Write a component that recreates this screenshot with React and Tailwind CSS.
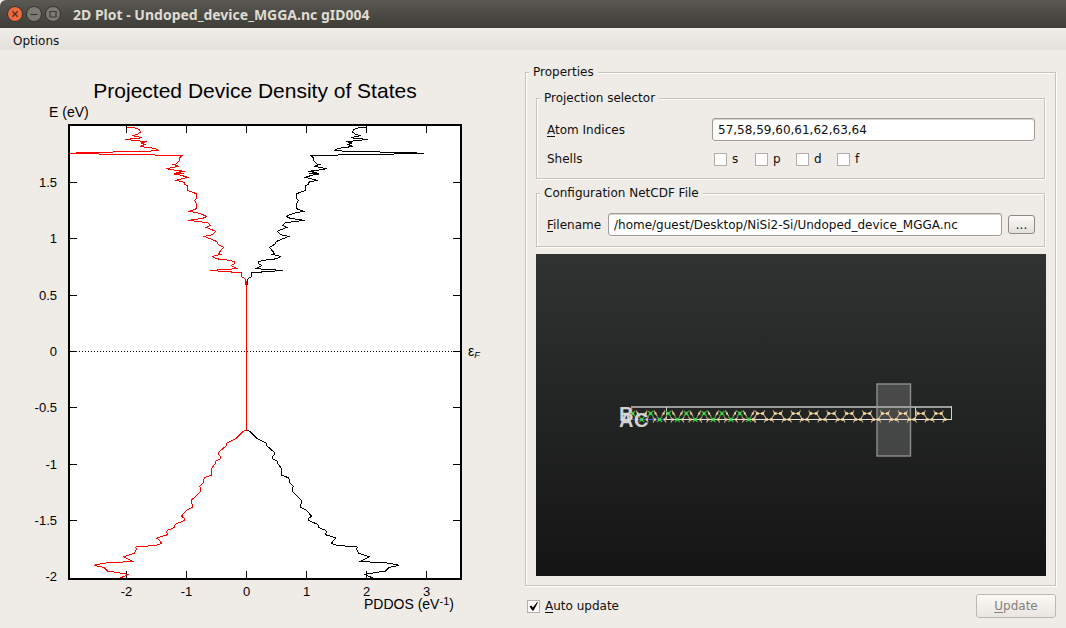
import React from "react";

// Density trace for the positive spin, in thirds of a plot unit
const UPPER_BAND =
  "379,52 360,52 342,58 337,66 345,72 360,77 334,83 350,86 385,88 358,91 319,95 335,99 324,103 340,110 312,112 290,117 283,122 330,124 417,126 507,128 552,130 465,132 297,135 214,137 219,142 221,152 230,162 238,164 223,169 240,172 260,176 237,180 205,184 232,187 207,190 237,192 215,196 196,202 216,207 233,211 204,217 206,222 196,228 196,242 184,246 170,251 170,265 175,271 170,280 170,296 180,300 191,304 160,310 139,319 150,325 194,331 137,338 128,346 140,352 112,364 122,374 146,379 108,395 106,402 89,412 103,430 98,433 122,439 112,446 70,451 55,455 56,461 65,467 50,475 70,478 128,481 80,485 35,488 34,500 24,506 22,524";

const LOWER_BAND =
  "20,91 30,94 50,115 75,127 80,130 79,136 103,157 103,165 98,168 97,176 112,184 114,192 124,205 124,225 145,233 149,240 149,247 160,260 157,262 157,275 183,299 185,302 181,322 200,331 215,349 205,355 205,361 233,373 237,383 257,391 259,396 256,404 289,414 277,424 275,431 290,436 352,441 350,448 355,459 370,464 388,470 358,485 420,487 450,490 478,496 448,502 437,513 405,518 375,523 385,528 400,535";

const X_TICKS = [
  { label: "-2", x: 126.5 },
  { label: "-1", x: 186.5 },
  { label: "0", x: 246.5 },
  { label: "1", x: 306.5 },
  { label: "2", x: 366.5 },
  { label: "3", x: 426.5 },
];

const Y_TICKS = [
  { label: "1.5", y: 182.5 },
  { label: "1", y: 238.5 },
  { label: "0.5", y: 295.5 },
  { label: "0", y: 351.5 },
  { label: "-0.5", y: 407.5 },
  { label: "-1", y: 464.5 },
  { label: "-1.5", y: 520.5 },
  { label: "-2", y: 576.5 },
];

const Band = ({ points, transform, color }) => (
  <polyline
    points={points}
    transform={transform}
    fill="none"
    stroke={color}
    strokeWidth="1"
    vectorEffect="non-scaling-stroke"
  />
);

const DensityPlot = () => {
  return (
    <svg
      viewBox="0 50 515 578"
      className="block w-full font-['Liberation_Sans',sans-serif]"
      role="img"
      aria-label="Projected Device Density of States"
    >
      <rect x="69" y="125" width="392" height="454" fill="#fff" />
      <text x="255" y="98" fontSize="21" textAnchor="middle">
        Projected Device Density of States
      </text>
      <text x="49" y="117" fontSize="14">
        E (eV)
      </text>
      <clipPath id="plot-area">
        <rect x="70" y="126" width="390" height="452" />
      </clipPath>
      <g shapeRendering="crispEdges" stroke="#000">
        <line x1="70" y1="351.5" x2="460" y2="351.5" strokeDasharray="1 2" />
        {X_TICKS.map(({ label, x }) => (
          <path key={label} d={`M${x} 125v8M${x} 579v-8`} />
        ))}
        {Y_TICKS.slice(0, 7).map(({ label, y }) => (
          <path key={label} d={`M69 ${y}h8M461 ${y}h-8`} />
        ))}
        <g clipPath="url(#plot-area)">
          <Band points={UPPER_BAND} transform="translate(240 110) scale(.33333)" color="#000" />
          <Band points={LOWER_BAND} transform="translate(240 400) scale(.33333)" color="#000" />
          <Band points={UPPER_BAND} transform="translate(253 110) scale(-.33333 .33333)" color="#f00" />
          <Band points={LOWER_BAND} transform="translate(253 400) scale(-.33333 .33333)" color="#f00" />
          <line x1="246.5" y1="281" x2="246.5" y2="431" stroke="#f00" />
        </g>
        <rect x="69" y="125" width="392" height="454" fill="none" strokeWidth="2" />
      </g>
      <g fontSize="13">
        {X_TICKS.map(({ label, x }) => (
          <text key={label} x={x} y="596" textAnchor="middle">
            {label}
          </text>
        ))}
        {Y_TICKS.map(({ label, y }) => (
          <text key={label} x="57" y={y + 4} textAnchor="end">
            {label}
          </text>
        ))}
      </g>
      <text x="364" y="609" fontSize="14">
        PDDOS (eV
        <tspan fontSize="11" dy="-4">
          -1
        </tspan>
        <tspan dy="4">)</tspan>
      </text>
      <text x="468" y="356" fontSize="14">
        ε
        <tspan fontSize="9" fontStyle="italic" dy="2">
          F
        </tspan>
      </text>
    </svg>
  );
};

const PERIOD = 17.85;
const SILICON = Array.from({ length: 11 }, (_, i) => 224 + i * PERIOD);
const NICKEL = Array.from({ length: 7 }, (_, i) => 96.7 + i * PERIOD);

const DeviceView = () => {
  return (
    <svg viewBox="0 0 510 322" className="block w-full" role="img" aria-label="Device configuration">
      <defs>
        <linearGradient id="backdrop" x1="0" y1="0" x2="0" y2="1">
          <stop offset="0" stopColor="#303332" />
          <stop offset="0.5" stopColor="#222423" />
          <stop offset="1" stopColor="#141414" />
        </linearGradient>
      </defs>
      <rect width="510" height="322" fill="url(#backdrop)" />
      <rect x="341" y="130" width="33.5" height="72" fill="#fff" fillOpacity="0.17" stroke="#8d8f8e" strokeWidth="1.4" />
      {/* unit cell */}
      <path d="M95 153H415.5" stroke="#9a9c9b" strokeWidth="2" />
      <path d="M130 165.5H415.5" stroke="#e6e6e6" />
      <path d="M130.5 153v13M379.5 153v13M415.5 152v14" stroke="#d0d0d0" />
      <path d="M95 165.5H130" stroke="#3a62e8" />
      <path d="M95.5 153v13" stroke="#f08030" strokeWidth="1.5" />
      {/* silicon */}
      {SILICON.map((x) => (
        <g key={x} transform={`translate(${x} 0)`}>
          <path
            d="M-3 159.5h6M3 159.5l3.5 5.5M-3 159.5l-3.5 5.5M3 159.5l1.8-3M-3 159.5l-1.8-3M6.5 165.5h-.8l-1.5 3M-6.5 165.5h.8l1.5 3"
            fill="none"
            stroke="#c4a981"
            strokeWidth="1.2"
          />
          <path d="M-4 158.3h2.8v2.4h-2.8zM1.2 158.3h2.8v2.4h-2.8zM-8 164.3h2.8v2.4h-2.8zM5.2 164.3h2.8v2.4h-2.8z" fill="#f8dba6" />
        </g>
      ))}
      {/* nickel silicide */}
      {NICKEL.map((x) => (
        <g key={x} transform={`translate(${x} 0)`}>
          <path
            d="M5 159.5l-1.5-3M5 159.5l2 3M13 159.5l1.5-3M13 159.5l-2 3M4 165.5l-2-3M4 165.5l-1.5 3M14 165.5l2-3M14 165.5l1.5 3"
            stroke="#c4a981"
            strokeWidth="1.2"
          />
          <path d="M4 158.5h2v2h-2zM12 158.5h2v2h-2zM3.5 164.5h2v2h-2zM13 164.5h2v2h-2z" fill="#f3d7a4" />
          <path d="M-2.5 157l5 5M-2.5 162l5-5M6.5 163l5 5M6.5 168l5-5" stroke="#2fae38" strokeWidth="1.4" />
          <path d="M-1.2 158.3h2.4v2.4h-2.4zM7.8 164.3h2.4v2.4h-2.4z" fill="#4be052" />
        </g>
      ))}
      <g
        className="font-['Liberation_Sans',sans-serif] font-bold"
        fontSize="20"
        fill="#dcdcdc"
        fillOpacity="0.95"
      >
        <text x="83" y="167">B</text>
        <text x="83" y="173">A</text>
        <text x="98" y="173">C</text>
      </g>
    </svg>
  );
};

const Group = ({ title, className = "", children }) => (
  <fieldset
    className={`min-w-0 border border-[#c6c3bf] px-[3px] shadow-[1px_1px_0_#fff,inset_1px_1px_0_#fff] ${className}`}
  >
    <legend className="bg-[#efebe7] px-1">{title}</legend>
    {children}
  </fieldset>
);

const Checkbox = ({ children, defaultChecked, className = "" }) => (
  <label className={`flex items-center gap-[5px] ${className}`}>
    <span className="grid size-[13px]">
      <input
        type="checkbox"
        defaultChecked={defaultChecked}
        className="peer col-start-1 row-start-1 size-[13px] appearance-none border border-[#b4afaa] bg-white"
      />
      <svg
        viewBox="0 0 13 13"
        className="pointer-events-none invisible col-start-1 row-start-1 size-[13px] peer-checked:visible"
      >
        <path d="M2.5 6.2l2-.6 1.3 1.9L10.3 2l.6.5L6.6 10.6H5.2z" />
      </svg>
    </span>
    <span>{children}</span>
  </label>
);

const inputClass =
  "h-[23px] min-w-0 flex-1 rounded-[3px] border border-[#a09a94] bg-white px-[5px] shadow-[inset_0_1px_0_#d5d2ce,0_1px_0_#f6f4f2] outline-none";

const TitleBar = () => (
  <header className="flex h-7 items-center rounded-tl-md bg-linear-to-b from-[#5a5852] to-[#3e3d38] pl-[7px]">
    <div className="flex gap-[3px]">
      <button type="button" aria-label="Close" className="size-4">
        <svg viewBox="0 0 16 16">
          <circle cx="8" cy="8" r="7.5" fill="#ee6a3e" stroke="#35342f" />
          <path d="M5.3 5.3l5.4 5.4M10.7 5.3l-5.4 5.4" stroke="#53301f" strokeWidth="1.3" />
        </svg>
      </button>
      <button type="button" aria-label="Minimize" className="size-4">
        <svg viewBox="0 0 16 16">
          <circle cx="8" cy="8" r="7.5" fill="#7c7a73" stroke="#35342f" />
          <path d="M4.5 8.5h7" stroke="#3a3935" strokeWidth="1.2" />
        </svg>
      </button>
      <button type="button" aria-label="Maximize" className="size-4">
        <svg viewBox="0 0 16 16">
          <circle cx="8" cy="8" r="7.5" fill="#7c7a73" stroke="#35342f" />
          <path d="M5 5.5h6v5.5h-6z" fill="none" stroke="#3a3935" strokeWidth="1.2" />
        </svg>
      </button>
    </div>
    <h1 className="ml-[12px] pt-px font-['Noto_Sans',sans-serif] text-[14px] font-bold text-[#dfdbd2]">
      2D Plot - Undoped_device_MGGA.nc gID004
    </h1>
  </header>
);

const PropertiesPanel = () => (
  <Group title="Properties">
    <div className="px-[7px] pt-[10px] pb-[9px]">
      <Group title="Projection selector">
        <div className="px-[6px] pt-3 pb-[11px] pl-[7px]">
          <div className="flex items-center">
            <label htmlFor="atoms" className="w-[165px]">
              <u className="underline-offset-2">A</u>tom Indices
            </label>
            <input id="atoms" className={inputClass} defaultValue="57,58,59,60,61,62,63,64" />
          </div>
          <div className="mt-[10px] flex items-center" role="group" aria-labelledby="shells">
            <span id="shells" className="w-[167px]">
              Shells
            </span>
            <Checkbox className="w-[41px]">s</Checkbox>
            <Checkbox className="w-[41px]">p</Checkbox>
            <Checkbox className="w-[41px]">d</Checkbox>
            <Checkbox className="w-[41px]">f</Checkbox>
          </div>
        </div>
      </Group>
      <Group title="Configuration NetCDF File" className="mt-[6px]">
        <div className="flex items-center px-[6px] pt-3 pb-[10px] pl-[7px]">
          <label htmlFor="filename" className="w-[61px]">
            <u className="underline-offset-2">F</u>ilename
          </label>
          <input
            id="filename"
            className={inputClass}
            defaultValue="/home/guest/Desktop/NiSi2-Si/Undoped_device_MGGA.nc"
          />
          <button
            type="button"
            className="ml-[6px] h-[19px] w-[27px] rounded-[3px] border border-[#8f8984] bg-linear-to-b from-[#fbfaf8] to-[#e3dfd9] leading-none"
          >
            ...
          </button>
        </div>
      </Group>
      <div className="mt-[7px] -mr-px">
        <DeviceView />
      </div>
    </div>
  </Group>
);

const App = () => {
  return (
    <div className="flex min-h-screen flex-col bg-[#efebe7] font-['DejaVu_Sans',sans-serif] text-[12px] leading-4 text-[#101010]">
      <TitleBar />
      <nav className="flex h-[22px] items-center bg-linear-to-b from-[#f0ede9] to-[#e4e1dc] px-[13px]">
        <button type="button" className="pt-[3px]">
          Options
        </button>
      </nav>
      <main className="grid grow grid-cols-[515fr_551fr]">
        <DensityPlot />
        <section className="px-[10px] pt-[14px]">
          <PropertiesPanel />
          <div className="mt-2 flex items-center justify-between pl-[2px]">
            <Checkbox defaultChecked>
              <u className="underline-offset-2">A</u>uto update
            </Checkbox>
            <button
              type="button"
              disabled
              className="h-6 w-20 rounded-[3px] border border-[#bcb7b1] bg-linear-to-b from-[#fbfaf7] to-[#e9e5df] text-[#85817c]"
            >
              <u className="underline-offset-2">U</u>pdate
            </button>
          </div>
        </section>
      </main>
    </div>
  );
};

export default App;
